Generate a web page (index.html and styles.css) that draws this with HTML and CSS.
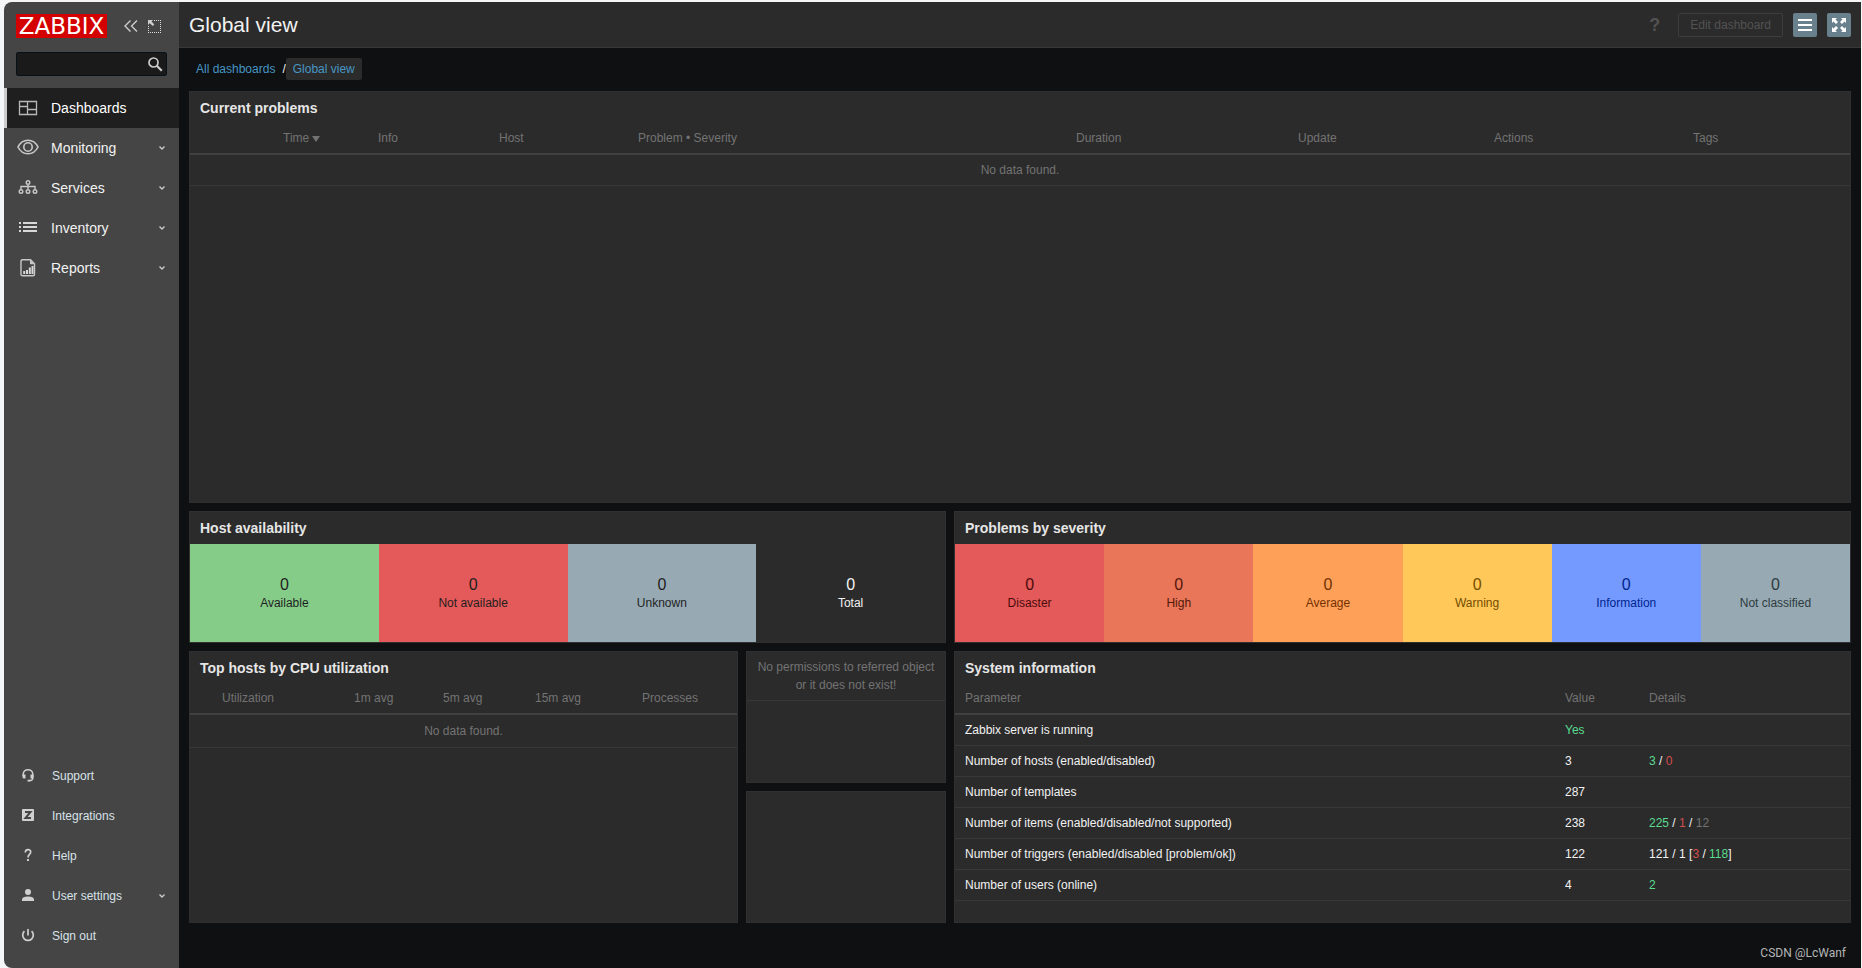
FILE: index.html
```html
<!DOCTYPE html>
<html lang="en">
<head>
<meta charset="utf-8">
<title>Global view</title>
<link rel="stylesheet" href="styles.css">
</head>
<body>
<div class="app">
  <aside class="sidebar">
    <div class="brand">
      <a class="logo" href="#">ZABBIX</a>
      <button class="brand-btn" type="button" aria-label="Collapse sidebar">
        <svg width="14" height="14" viewBox="0 0 14 14"><path d="M6.500 1.500L1 7l5.500 5.500M13 1.500L7.500 7l5.500 5.500" fill="none" stroke="#ccc" stroke-width="1.400"/></svg>
      </button>
      <button class="brand-btn" type="button" aria-label="Hide sidebar">
        <svg width="13" height="13" viewBox="0 0 13 13"><path d="M6 .5H7M8 .5H9M10 .5H11M12 .5H13M12 2.500H13M12 4.500H13M12 6.500H13M12 8.500H13M12 10.500H13M12 12.500H13M10 12.500H11M8 12.500H9M6 12.500H7M4 12.500H5M2 12.500H3M0 12.500H1M0 10.500H1M0 8.500H1M0 6.500H1" fill="none" stroke="#ddd"/><path d="M0 0h5L3.600 1.500 6.300 4.500 4.800 6 1.700 3.300 0 5z" fill="#ccc"/></svg>
      </button>
    </div>
    <form class="search">
      <input class="search-input" type="text" aria-label="Search">
      <button class="search-btn" type="button" aria-label="Search">
        <svg width="15" height="15" viewBox="0 0 15 15"><circle cx="5.500" cy="5.500" r="4.500" fill="none" stroke="#ccc" stroke-width="1.700"/><path d="M8.800 8.800l5 5" stroke="#ccc" stroke-width="2.200"/></svg>
      </button>
    </form>
    <nav class="menu">
      <a class="item active" href="#"><svg class="icon" width="22" height="18" viewBox="0 0 22 18"><path d="M2.500 2.500h17v13h-17zM10.500 2.500v13M2.500 7.500h8M10.500 10.500h9" fill="none" stroke="#b8b8b8" stroke-width="1.300"/></svg><span>Dashboards</span></a>
      <a class="item" href="#"><svg class="icon" width="22" height="18" viewBox="0 0 22 18"><path d="M1 8C5.500 -1 16.500 -1 21 8C16.500 17 5.500 17 1 8z" fill="none" stroke="#c8c8c8" stroke-width="1.600"/><circle cx="11" cy="8" r="4.200" fill="none" stroke="#c8c8c8" stroke-width="1.600"/></svg><span>Monitoring</span><svg class="arrow" width="8" height="6" viewBox="0 0 8 6"><path d="M1.500 1.500l2.500 2.500 2.500-2.500" fill="none" stroke="#ccc" stroke-width="1.300"/></svg></a>
      <a class="item" href="#"><svg class="icon" width="22" height="18" viewBox="0 0 22 18"><g fill="none" stroke="#c8c8c8" stroke-width="1.400"><circle cx="11" cy="3.500" r="1.800"/><circle cx="4" cy="12.500" r="1.800"/><circle cx="11" cy="12.500" r="1.800"/><circle cx="18" cy="12.500" r="1.800"/><path d="M11 5.500V10M4 10V7.500H18V10"/></g></svg><span>Services</span><svg class="arrow" width="8" height="6" viewBox="0 0 8 6"><path d="M1.500 1.500l2.500 2.500 2.500-2.500" fill="none" stroke="#ccc" stroke-width="1.300"/></svg></a>
      <a class="item" href="#"><svg class="icon" width="22" height="18" viewBox="0 0 22 18"><path d="M2 4h2M6 4h14M2 8h2M6 8h14M2 12h2M6 12h14" stroke="#d8d8d8" stroke-width="2"/></svg><span>Inventory</span><svg class="arrow" width="8" height="6" viewBox="0 0 8 6"><path d="M1.500 1.500l2.500 2.500 2.500-2.500" fill="none" stroke="#ccc" stroke-width="1.300"/></svg></a>
      <a class="item" href="#"><svg class="icon" width="22" height="18" viewBox="0 0 22 18"><path d="M5.500 .7H13.500L17.500 4.700V15.200Q17.500 16.700 16 16.700H5.500Q4 16.700 4 15.200V2.200Q4 .7 5.500 .7z" fill="none" stroke="#c8c8c8" stroke-width="1.400"/><path d="M13 .7V5.200H17.500z" fill="#c8c8c8"/><path d="M7.200 15v-3M10 15v-4M12.800 15V8.500M15.500 15V7" stroke="#d8d8d8" stroke-width="2"/></svg><span>Reports</span><svg class="arrow" width="8" height="6" viewBox="0 0 8 6"><path d="M1.500 1.500l2.500 2.500 2.500-2.500" fill="none" stroke="#ccc" stroke-width="1.300"/></svg></a>
    </nav>
    <nav class="menu user-menu">
      <a class="item" href="#"><svg class="icon" width="22" height="18" viewBox="0 0 22 18"><path d="M6.200 9V7.500C6.200 1 15.800 1 15.800 7.500V11Q15.800 13.700 12 13.700" fill="none" stroke="#d0d0d0" stroke-width="1.500"/><path d="M5.500 7.500h3v4H7Q5.500 11.500 5.500 10zM16.500 7.500h-3v4H15Q16.500 11.500 16.500 10zM10.500 12.800h2.500v1.800h-2.500z" fill="#d0d0d0"/></svg><span>Support</span></a>
      <a class="item" href="#"><svg class="icon" width="22" height="18" viewBox="0 0 22 18"><rect x="5" y="2" width="12" height="12" rx="1" fill="#d0d0d0"/><path d="M8 5h5.500L8.500 11H14" fill="none" stroke="#444" stroke-width="2"/></svg><span>Integrations</span></a>
      <a class="item" href="#"><svg class="icon" width="22" height="18" viewBox="0 0 22 18"><path d="M8.300 5.500C8.300 1.700 13.700 1.700 13.700 5.100C13.700 7.500 11 7.500 11 10.500" fill="none" stroke="#d0d0d0" stroke-width="1.700"/><rect x="10" y="12" width="2" height="2" fill="#d0d0d0"/></svg><span>Help</span></a>
      <a class="item" href="#"><svg class="icon" width="22" height="18" viewBox="0 0 22 18"><circle cx="11" cy="5" r="3" fill="#d0d0d0"/><path d="M5 14V12.500C5 10.300 8.500 9.500 11 9.500S17 10.300 17 12.500V14z" fill="#d0d0d0"/></svg><span>User settings</span><svg class="arrow" width="8" height="6" viewBox="0 0 8 6"><path d="M1.500 1.500l2.500 2.500 2.500-2.500" fill="none" stroke="#ccc" stroke-width="1.300"/></svg></a>
      <a class="item" href="#"><svg class="icon" width="22" height="18" viewBox="0 0 22 18"><path d="M7.400 4.200A5.300 5.300 0 1 0 14.600 4.200M11 2V8.500" fill="none" stroke="#d0d0d0" stroke-width="1.700"/></svg><span>Sign out</span></a>
    </nav>
  </aside>
  <div class="page">
    <header class="header">
      <h1 class="title">Global view</h1>
      <div class="actions">
        <a class="help" href="#">?</a>
        <button class="edit" type="button" disabled>Edit dashboard</button>
        <button class="tool" type="button" aria-label="Actions"><svg width="14" height="14" viewBox="0 0 14 14"><path d="M0 2h14M0 7h14M0 12h14" stroke="#fff" stroke-width="2"/></svg></button>
        <button class="tool" type="button" aria-label="Kiosk mode"><svg width="14" height="14" viewBox="0 0 14 14"><path d="M0 0h5L3.500 1.500 6 4 4 6 1.500 3.500 0 5zM14 0v5l-1.500-1.500L10 6 8 4l2.500-2.500L9 0zM0 14V9l1.500 1.500L4 8l2 2-2.500 2.500L5 14zM14 14H9l1.500-1.500L8 10l2-2 2.500 2.500L14 9z" fill="#fff"/></svg></button>
      </div>
    </header>
    <main class="content">
      <nav class="crumbs" aria-label="Breadcrumb"><a href="#">All dashboards</a><span class="slash">/</span><a class="current" href="#">Global view</a></nav>
      <div class="dashboard">
        <section class="widget problems">
          <h2>Current problems</h2>
          <table class="grid">
            <colgroup><col class="p0"><col class="p1"><col class="p2"><col class="p3"><col class="p4"><col class="p5"><col class="p6"><col class="p7"><col class="p8"></colgroup>
            <thead><tr><th></th><th>Time<span class="sort"></span></th><th>Info</th><th>Host</th><th>Problem • Severity</th><th>Duration</th><th>Update</th><th>Actions</th><th>Tags</th></tr></thead>
            <tbody><tr><td class="empty" colspan="9">No data found.</td></tr></tbody>
          </table>
        </section>
        <section class="widget hosts">
          <h2>Host availability</h2>
          <div class="tiles">
            <div class="tile available"><b>0</b><span>Available</span></div>
            <div class="tile unavailable"><b>0</b><span>Not available</span></div>
            <div class="tile unknown"><b>0</b><span>Unknown</span></div>
            <div class="tile total"><b>0</b><span>Total</span></div>
          </div>
        </section>
        <section class="widget severity">
          <h2>Problems by severity</h2>
          <div class="tiles">
            <div class="tile disaster"><b>0</b><span>Disaster</span></div>
            <div class="tile high"><b>0</b><span>High</span></div>
            <div class="tile average"><b>0</b><span>Average</span></div>
            <div class="tile warning"><b>0</b><span>Warning</span></div>
            <div class="tile information"><b>0</b><span>Information</span></div>
            <div class="tile unclassified"><b>0</b><span>Not classified</span></div>
          </div>
        </section>
        <section class="widget top">
          <h2>Top hosts by CPU utilization</h2>
          <table class="grid">
            <colgroup><col class="t0"><col class="t1"><col class="t2"><col class="t3"><col class="t4"><col class="t5"></colgroup>
            <thead><tr><th></th><th>Utilization</th><th>1m avg</th><th>5m avg</th><th>15m avg</th><th>Processes</th></tr></thead>
            <tbody><tr><td class="empty" colspan="6">No data found.</td></tr></tbody>
          </table>
        </section>
        <section class="widget denied"><p>No permissions to referred object or it does not exist!</p></section>
        <section class="widget blank"></section>
        <section class="widget system">
          <h2>System information</h2>
          <table class="grid info">
            <colgroup><col class="s0"><col class="s1"><col class="s2"></colgroup>
            <thead><tr><th>Parameter</th><th>Value</th><th>Details</th></tr></thead>
            <tbody>
              <tr><td>Zabbix server is running</td><td class="green">Yes</td><td></td></tr>
              <tr><td>Number of hosts (enabled/disabled)</td><td>3</td><td><span class="green">3</span> / <span class="red">0</span></td></tr>
              <tr><td>Number of templates</td><td>287</td><td></td></tr>
              <tr><td>Number of items (enabled/disabled/not supported)</td><td>238</td><td><span class="green">225</span> / <span class="red">1</span> / <span class="grey">12</span></td></tr>
              <tr><td>Number of triggers (enabled/disabled [problem/ok])</td><td>122</td><td>121 / 1 [<span class="red">3</span> / <span class="green">118</span>]</td></tr>
              <tr><td>Number of users (online)</td><td>4</td><td class="green">2</td></tr>
            </tbody>
          </table>
        </section>
      </div>
      <footer class="credit">CSDN @LcWanf</footer>
    </main>
  </div>
</div>
</body>
</html>
```
FILE: styles.css
```css
* { box-sizing: border-box; }
body {
  margin: 0;
  background: #f5f6f7;
  color: #f2f2f2;
  font: 12px/18px "Liberation Sans", Arial, sans-serif;
}
a { color: inherit; text-decoration: none; }
button, input { font: inherit; margin: 0; }
svg { display: block; flex: none; }
.app {
  display: flex;
  min-height: 100vh;
  padding: 2px 1px 0 4px;
}
.sidebar {
  display: flex;
  flex-direction: column;
  flex: none;
  width: 175px;
  padding-bottom: 12px;
  border-radius: 8px 0 0 8px;
  background: #454545;
}
.brand {
  display: flex;
  align-items: center;
  padding: 12px 12px 0;
}
.logo {
  width: 91px;
  margin-right: 12px;
  background: #d40000;
  color: #fff;
  font: 23px/24px "DejaVu Sans", sans-serif;
  text-align: center;
}
.brand-btn {
  padding: 0 5px;
  border: 0;
  background: none;
}
.search {
  display: flex;
  align-items: center;
  height: 24px;
  margin: 14px 12px 12px;
  border: 1px solid #06121a;
  border-radius: 2px;
  background: #1a1a1a;
}
.search-input {
  flex: 1;
  min-width: 0;
  height: 22px;
  padding: 0 5px;
  border: 0;
  outline: 0;
  background: none;
  color: #f2f2f2;
}
.search-btn { padding: 0 3px; border: 0; background: none; }
.item {
  display: flex;
  align-items: center;
  height: 40px;
  padding: 0 13px 0 10px;
  border-left: 3px solid transparent;
  font-size: 14px;
}
.item.active { border-color: #ccc; background: #1f1f1f; color: #fff; }
.icon { margin-right: 12px; }
.arrow { margin-left: auto; }
.user-menu { margin-top: auto; color: #d8e2e8; }
.user-menu .item { font-size: 12px; }
.user-menu .icon { margin-right: 13px; }
.page {
  display: flex;
  flex-direction: column;
  flex: 1;
  min-width: 0;
  background: #0e1012;
}
.header {
  display: flex;
  align-items: center;
  justify-content: space-between;
  height: 46px;
  padding: 0 10px;
  border-bottom: 1px solid #383838;
  background: #2b2b2b;
}
.title { margin: 0; font-size: 21px; font-weight: normal; line-height: 24px; }
.actions { display: flex; align-items: center; gap: 10px; }
.help { margin-right: 8px; color: #525252; font-size: 18px; font-weight: bold; }
.edit {
  height: 24px;
  padding: 0 11px;
  border: 1px solid #3d3d3d;
  border-radius: 2px;
  background: none;
  color: #525252;
}
.tool {
  display: grid;
  place-items: center;
  width: 24px;
  height: 24px;
  padding: 0;
  border: 0;
  border-radius: 2px;
  background: #69808d;
}
.content {
  display: flex;
  flex-direction: column;
  flex: 1;
  padding: 10px 10px 0;
}
.crumbs {
  display: flex;
  align-items: center;
  padding-left: 7px;
  margin-bottom: 11px;
  color: #4796c4;
  line-height: 22px;
}
.slash { padding-left: 7px; color: #f2f2f2; }
.current { padding: 0 7px; border-radius: 2px; background: #2b2b2b; }
.dashboard {
  display: grid;
  grid-template-columns: 549fr 200fr 897fr;
  grid-template-rows: minmax(412px, auto) repeat(3, minmax(132px, auto));
  grid-template-areas:
    "problems problems problems"
    "hosts hosts severity"
    "top denied system"
    "top blank system";
  gap: 8px;
}
.widget {
  display: flex;
  flex-direction: column;
  min-width: 0;
  border: 1px solid #303030;
  background: #2b2b2b;
}
.problems { grid-area: problems; }
.hosts { grid-area: hosts; }
.severity { grid-area: severity; }
.top { grid-area: top; }
.denied { grid-area: denied; }
.blank { grid-area: blank; }
.system { grid-area: system; }
.widget h2 { margin: 0; padding: 0 10px; font-size: 14px; line-height: 32px; color: #e6e6e6; }
.grid { width: 100%; table-layout: fixed; border-collapse: separate; border-spacing: 0; }
.grid th {
  height: 31px;
  padding: 0 0 2px;
  border-bottom: 2px solid #404040;
  color: #737373;
  font-weight: normal;
  text-align: left;
  white-space: nowrap;
}
.grid td { height: 31px; padding: 0; border-bottom: 1px solid #383838; }
.grid .empty { color: #737373; text-align: center; }
.top .empty { height: 33px; }
.info th { padding: 0 10px 2px; }
.info td { padding: 0 10px; }
.sort {
  display: inline-block;
  margin-left: 3px;
  border: 4px solid transparent;
  border-top: 6px solid #737373;
  border-bottom: 0;
}
.p0 { width: 93px; }
.p1 { width: 95px; }
.p2 { width: 121px; }
.p3 { width: 139px; }
.p4 { width: 438px; }
.p5 { width: 222px; }
.p6 { width: 196px; }
.p7 { width: 199px; }
.p8 { width: 157px; }
.t0 { width: 32px; }
.t1 { width: 132px; }
.t2 { width: 89px; }
.t3 { width: 92px; }
.t4 { width: 107px; }
.t5 { width: 95px; }
.s0 { width: 600px; }
.s1 { width: 84px; }
.s2 { width: 211px; }
.green { color: #59db8f; }
.red { color: #d64e4e; }
.grey { color: #737373; }
.tiles { display: flex; flex: 1; }
.tile {
  display: flex;
  flex: 1 1 0;
  flex-direction: column;
  align-items: center;
  justify-content: center;
}
.tile b { font-size: 16px; font-weight: normal; line-height: 20px; }
.tile span { line-height: 16px; }
.available { background: #86cc89; color: #1f1f1f; }
.unavailable { background: #e45959; color: #1f1f1f; }
.unknown { background: #97aab3; color: #1f1f1f; }
.total { color: #f2f2f2; }
.disaster { background: #e45959; color: #4b0c0c; }
.high { background: #e97659; color: #52190b; }
.average { background: #ffa059; color: #733100; }
.warning { background: #ffc859; color: #734d00; }
.information { background: #7499ff; color: #00268e; }
.unclassified { background: #97aab3; color: #2e3a40; }
.denied p {
  margin: 0;
  padding: 6px 8px;
  border-bottom: 1px solid #383838;
  color: #737373;
  text-align: center;
}
.credit {
  margin-top: auto;
  padding: 0 15px 6px 0;
  margin-right: -10px;
  color: #b5b5b5;
  font-family: Roboto, sans-serif;
  text-align: right;
}
```
